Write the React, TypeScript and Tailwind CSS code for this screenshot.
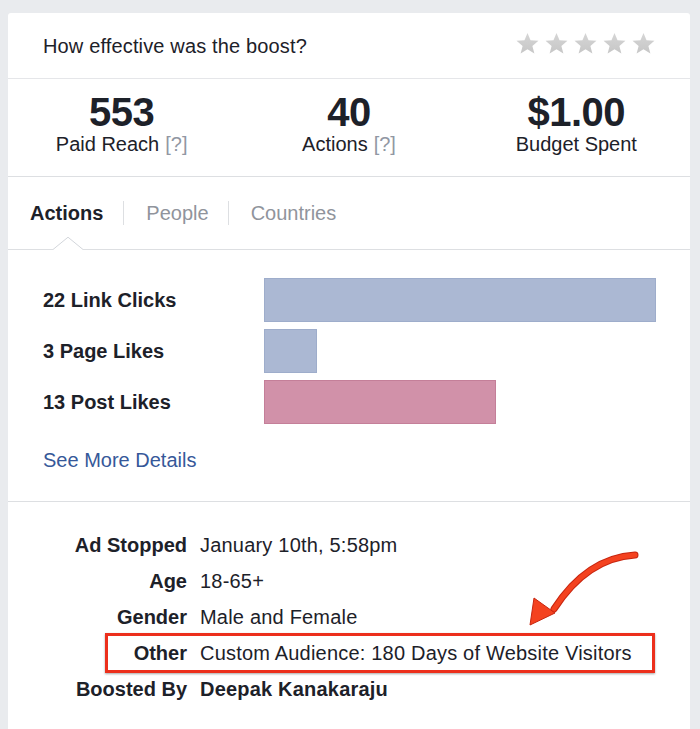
import React from "react"

// Boost results card: rating header, stats, action tabs with bars, targeting details

const font = { fontFamily: '"Liberation Sans", Arial, Helvetica, sans-serif' }

const stats = [
    { value: "553", label: "Paid Reach", hint: true },
    { value: "40", label: "Actions", hint: true },
    { value: "$1.00", label: "Budget Spent", hint: false },
]

const actions = [
    { label: "22 Link Clicks", count: 22, kind: "blue" },
    { label: "3 Page Likes", count: 3, kind: "blue" },
    { label: "13 Post Likes", count: 13, kind: "pink" },
]

const details = [
    { label: "Ad Stopped", value: "January 10th, 5:58pm", boldValue: false },
    { label: "Age", value: "18-65+", boldValue: false },
    { label: "Gender", value: "Male and Female", boldValue: false },
    { label: "Other", value: "Custom Audience: 180 Days of Website Visitors", boldValue: false, marked: true },
    { label: "Boosted By", value: "Deepak Kanakaraju", boldValue: true },
]

const MAX_BAR = 392

const Star = () => (
    <svg width="25" height="25" viewBox="0 0 24 24">
        <defs>
            <linearGradient id="starFill" x1="0" y1="0" x2="0" y2="1">
                <stop offset="0" stopColor="#d6d6d6" />
                <stop offset="1" stopColor="#c6c6c6" />
            </linearGradient>
        </defs>
        <path
            d="M12 1.8l2.9 7.1 7.6.5-5.8 4.9 1.9 7.4L12 17.6l-6.6 4.1 1.9-7.4-5.8-4.9 7.6-.5z"
            fill="url(#starFill)"
        />
    </svg>
)

export default function App() {
    return (
        <div className="h-[729px] bg-[#e9ebee] pt-[13px] pl-[8px] pr-[10px] overflow-hidden" style={font}>
            <div className="bg-white rounded-t-[3px] text-[#1d2129] min-h-[760px]">

                {/* Header */}
                <div className="h-[66px] flex items-center justify-between pl-[35px] pr-[34px] border-b border-[#e5e6e9]">
                    <div className="text-[20px] leading-[24px] tracking-[0.15px]">How effective was the boost?</div>
                    <div className="flex gap-[4px] -mt-[5px]">
                        <Star />
                        <Star />
                        <Star />
                        <Star />
                        <Star />
                    </div>
                </div>

                {/* Stats */}
                <div className="grid grid-cols-3 pt-[13px] pb-[20px] border-b border-[#dddfe2]">
                    {stats.map((s) => (
                        <div key={s.label} className="flex flex-col items-center">
                            <div className="text-[40px] leading-[40px] font-bold tracking-[-0.5px]">{s.value}</div>
                            <div className="text-[20px] leading-[24px]">
                                {s.label}
                                {s.hint && <span className="text-[#9197a3] ml-[6px]">[?]</span>}
                            </div>
                        </div>
                    ))}
                </div>

                {/* Tabs */}
                <div className="relative h-[73px] flex items-center border-b border-[#dddfe2]">
                    <div className="ml-[22px] text-[20px] leading-[24px] font-bold">Actions</div>
                    <div className="ml-[20px] mr-[22px] w-px h-[24px] bg-[#dddfe2]" />
                    <div className="text-[20px] leading-[24px] text-[#90949c]">People</div>
                    <div className="ml-[19px] mr-[22px] w-px h-[24px] bg-[#dddfe2]" />
                    <div className="text-[20px] leading-[24px] text-[#90949c]">Countries</div>
                    <svg className="absolute left-[45px] -bottom-[1px]" width="30" height="14" viewBox="0 0 30 14">
                        <polygon points="0,13.5 15,1 30,13.5" fill="#ffffff" />
                        <rect x="0" y="13" width="30" height="1" fill="#ffffff" />
                        <polyline points="0,13.5 15,1.2 30,13.5" fill="none" stroke="#d3d6db" strokeWidth="1" />
                    </svg>
                </div>

                {/* Action bars */}
                <div className="pt-[28px] pb-[29px] pl-[35px] border-b border-[#dddfe2]">
                    <div className="flex flex-col gap-[7px]">
                        {actions.map((a) => (
                            <div key={a.label} className="flex items-center h-[44px]">
                                <div className="w-[221px] text-[20px] leading-[24px] font-bold">{a.label}</div>
                                <div
                                    className={
                                        a.kind === "blue"
                                            ? "h-[44px] bg-[#abb8d3] border border-[#9eadcb]"
                                            : "h-[44px] bg-[#d191a9] border border-[#c47f99]"
                                    }
                                    style={{ width: Math.round((a.count / 22) * MAX_BAR) }}
                                />
                            </div>
                        ))}
                    </div>
                    <div className="mt-[24px] text-[20px] leading-[24px] text-[#365899]">See More Details</div>
                </div>

                {/* Details */}
                <div className="relative pt-[25px] pb-[40px]">
                    {details.map((d) => (
                        <div key={d.label} className="relative flex h-[36px] items-center">
                            <div className="w-[179px] text-right text-[20px] leading-[24px] font-bold">{d.label}</div>
                            <div className={"ml-[13px] text-[20px] leading-[24px] tracking-[0.2px]" + (d.boldValue ? " font-bold" : "")}>
                                {d.value}
                            </div>
                            {d.marked && (
                                <div className="absolute left-[97px] w-[550px] -top-[2px] h-[40px] border-[3px] border-[#ec2f1c] shadow-[0_1px_2px_rgba(0,0,0,0.35)]" />
                            )}
                        </div>
                    ))}
                    <svg className="absolute left-[510px] top-[47px]" width="125" height="80" viewBox="0 0 125 80">
                        <path
                            d="M117 6 C 85 8, 58 26, 36 60"
                            fill="none"
                            stroke="#c7250f"
                            strokeWidth="7"
                            strokeLinecap="round"
                        />
                        <path
                            d="M117 6 C 85 8, 58 26, 36 60"
                            fill="none"
                            stroke="#f4421f"
                            strokeWidth="5"
                            strokeLinecap="round"
                        />
                        <polygon points="12,76 16,49 37,64" fill="#f4421f" stroke="#c7250f" strokeWidth="1" strokeLinejoin="round" />
                    </svg>
                </div>
            </div>
        </div>
    )
}
